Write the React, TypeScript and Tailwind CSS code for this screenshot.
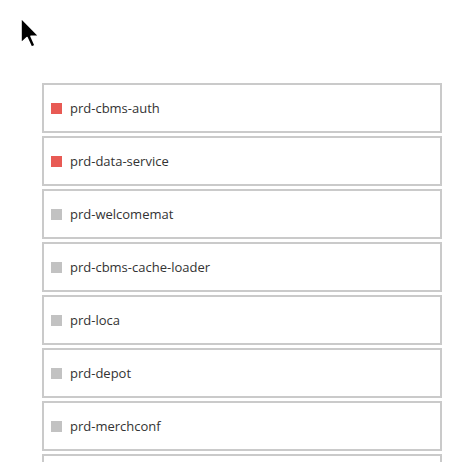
import React from "react";

const items: { name: string; red: boolean }[] = [
  { name: "prd-cbms-auth", red: true },
  { name: "prd-data-service", red: true },
  { name: "prd-welcomemat", red: false },
  { name: "prd-cbms-cache-loader", red: false },
  { name: "prd-loca", red: false },
  { name: "prd-depot", red: false },
  { name: "prd-merchconf", red: false },
  { name: "", red: false },
];

function Cursor() {
  return (
    <svg
      className="absolute left-[19px] top-[16px]"
      width="24"
      height="34"
      viewBox="0 0 12 17"
    >
      <path
        d="M1 1 L1 13.5 L4 10.8 L6.2 15.6 L8.1 14.8 L6 10.1 L10 10.1 Z"
        fill="#000"
        stroke="#fff"
        strokeWidth="0.8"
        strokeLinejoin="round"
      />
    </svg>
  );
}

export default function App() {
  return (
    <div className="relative w-[476px] h-[462px] overflow-hidden bg-white" style={{ fontFamily: '"Open Sans", "Noto Sans", sans-serif' }}>
      <Cursor />
      <div className="pt-[83px] pl-[42px] flex flex-col gap-[3px] w-[442px]">
        {items.map((it, i) => (
          <div
            key={i}
            className="h-[50px] border-2 border-[#cacaca] bg-white flex items-center pl-[7px]"
          >
            {it.name && (
              <>
                <span
                  className={`w-[11px] h-[11px] ${it.red ? "bg-[#e85a54]" : "bg-[#c2c2c2]"}`}
                />
                <span className="ml-[8px] text-[13px] text-[#333333] leading-none">
                  {it.name}
                </span>
              </>
            )}
          </div>
        ))}
      </div>
    </div>
  );
}
